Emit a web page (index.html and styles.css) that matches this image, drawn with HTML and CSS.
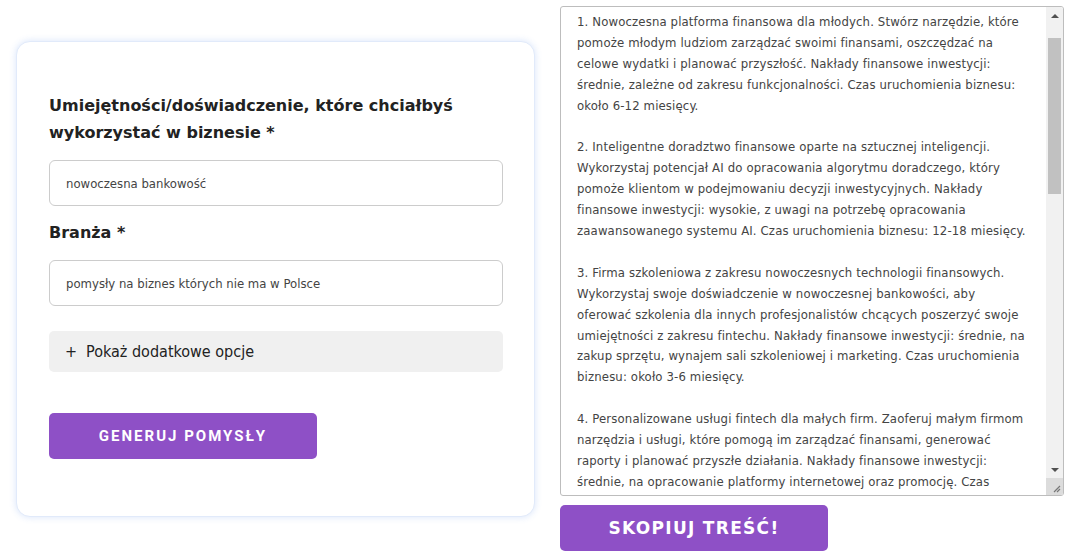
FILE: index.html
```html
<!DOCTYPE html>
<html lang="pl">
<head>
<meta charset="utf-8">
<title>Generator pomysłów na biznes</title>
<link rel="stylesheet" href="styles.css">
</head>
<body>
<div class="page">
  <div class="card">
    <label class="label" for="skills">Umiejętności/doświadczenie, które chciałbyś<br>wykorzystać w biznesie *</label>
    <div class="input" id="skills">nowoczesna bankowość</div>
    <label class="label" for="industry">Branża *</label>
    <div class="input" id="industry">pomysły na biznes których nie ma w Polsce</div>
    <div class="toggle"><span class="plus">+</span>Pokaż dodatkowe opcje</div>
    <div class="btn btn-gen">GENERUJ POMYSŁY</div>
  </div>
  <div class="right">
    <div class="output">
      <div class="output-text">
        <p>1. Nowoczesna platforma finansowa dla młodych. Stwórz narzędzie, które<br>pomoże młodym ludziom zarządzać swoimi finansami, oszczędzać na<br>celowe wydatki i planować przyszłość. Nakłady finansowe inwestycji:<br>średnie, zależne od zakresu funkcjonalności. Czas uruchomienia biznesu:<br>około 6-12 miesięcy.</p>
        <p>2. Inteligentne doradztwo finansowe oparte na sztucznej inteligencji.<br>Wykorzystaj potencjał AI do opracowania algorytmu doradczego, który<br>pomoże klientom w podejmowaniu decyzji inwestycyjnych. Nakłady<br>finansowe inwestycji: wysokie, z uwagi na potrzebę opracowania<br>zaawansowanego systemu AI. Czas uruchomienia biznesu: 12-18 miesięcy.</p>
        <p>3. Firma szkoleniowa z zakresu nowoczesnych technologii finansowych.<br>Wykorzystaj swoje doświadczenie w nowoczesnej bankowości, aby<br>oferować szkolenia dla innych profesjonalistów chcących poszerzyć swoje<br>umiejętności z zakresu fintechu. Nakłady finansowe inwestycji: średnie, na<br>zakup sprzętu, wynajem sali szkoleniowej i marketing. Czas uruchomienia<br>biznesu: około 3-6 miesięcy.</p>
        <p>4. Personalizowane usługi fintech dla małych firm. Zaoferuj małym firmom<br>narzędzia i usługi, które pomogą im zarządzać finansami, generować<br>raporty i planować przyszłe działania. Nakłady finansowe inwestycji:<br>średnie, na opracowanie platformy internetowej oraz promocję. Czas<br>uruchomienia biznesu: około 9-12 miesięcy.</p>
      </div>
      <div class="scrollbar">
        <div class="arrow arrow-up"></div>
        <div class="track"><div class="thumb"></div></div>
        <div class="arrow arrow-down"></div>
        <div class="corner">
          <svg width="10" height="10" viewBox="0 0 10 10"><path d="M9 3 L3 9 M9 6 L6 9" stroke="#777" stroke-width="1.2" fill="none"/></svg>
        </div>
      </div>
    </div>
    <div class="btn btn-copy">SKOPIUJ TREŚĆ!</div>
  </div>
</div>
</body>
</html>
```

FILE: styles.css
```css
html, body {
  margin: 0;
  padding: 0;
  background: #ffffff;
}

.page {
  display: flex;
  align-items: flex-start;
  gap: 25px;
  padding: 6px 0 0 16px;
}

.card {
  box-sizing: border-box;
  width: 519px;
  height: 476px;
  margin-top: 35px;
  padding: 50px 31px 0 32px;
  background: #fff;
  border: 1px solid #e1eafa;
  border-radius: 14px;
  box-shadow: 0 0 7px rgba(60, 120, 230, 0.2);
  display: flex;
  flex-direction: column;
}

.label {
  display: block;
  font-family: "DejaVu Sans", Verdana, sans-serif;
  font-weight: bold;
  font-size: 16px;
  line-height: 27px;
  color: #222;
  margin: 0 0 14px 0;
}

.input {
  box-sizing: border-box;
  height: 46px;
  border: 1px solid #cccccc;
  border-radius: 6px;
  padding: 0 16px;
  display: flex;
  align-items: center;
  font-family: "DejaVu Sans Condensed", "DejaVu Sans", sans-serif;
  font-size: 13px;
  color: #444;
  margin-bottom: 13px;
}

.toggle {
  box-sizing: border-box;
  height: 41px;
  margin-top: 12px;
  background: #f0f0f0;
  border-radius: 5px;
  padding: 0 16px;
  display: flex;
  align-items: center;
  font-family: "DejaVu Sans Condensed", "DejaVu Sans", sans-serif;
  font-size: 16px;
  color: #222;
}

.plus {
  margin-right: 9px;
}

.btn {
  box-sizing: border-box;
  width: 268px;
  height: 46px;
  background: #8e50c6;
  border-radius: 5px;
  color: #fff;
  display: flex;
  align-items: center;
  justify-content: center;
  font-weight: bold;
}

.btn-gen {
  margin-top: 41px;
  font-family: Roboto, "Liberation Sans", sans-serif;
  font-size: 15px;
  letter-spacing: 2px;
}

.right {
  display: flex;
  flex-direction: column;
}

.output {
  box-sizing: border-box;
  width: 504px;
  height: 490px;
  border: 1px solid #bdbdbd;
  border-radius: 3px;
  display: flex;
  overflow: hidden;
}

.output-text {
  flex: 1;
  padding: 5px 8px 0 16px;
  font-family: "DejaVu Sans Condensed", "DejaVu Sans", sans-serif;
  font-size: 13px;
  line-height: 20.9px;
  letter-spacing: 0.14px;
  color: #444;
  overflow: hidden;
  white-space: nowrap;
}

.output-text p {
  margin: 0 0 20.9px 0;
}

.scrollbar {
  width: 17px;
  background: #f1f1f1;
  display: flex;
  flex-direction: column;
}

.arrow {
  height: 17px;
  display: flex;
  align-items: center;
  justify-content: center;
}

.arrow::after {
  content: "";
  width: 0;
  height: 0;
  border-left: 4px solid transparent;
  border-right: 4px solid transparent;
}

.arrow-up::after {
  border-bottom: 4px solid #505050;
}

.arrow-down::after {
  border-top: 4px solid #505050;
}

.track {
  flex: 1;
  padding: 14px 2px 0 2px;
}

.thumb {
  height: 156px;
  background: #c1c1c1;
}

.corner {
  height: 17px;
  background: #dcdcdc;
  display: flex;
  align-items: flex-end;
  justify-content: flex-end;
  padding: 0 2px 2px 0;
  box-sizing: border-box;
}

.btn-copy {
  margin-top: 9px;
  font-family: "DejaVu Sans", Verdana, sans-serif;
  font-size: 17px;
  letter-spacing: 1.3px;
}
```
